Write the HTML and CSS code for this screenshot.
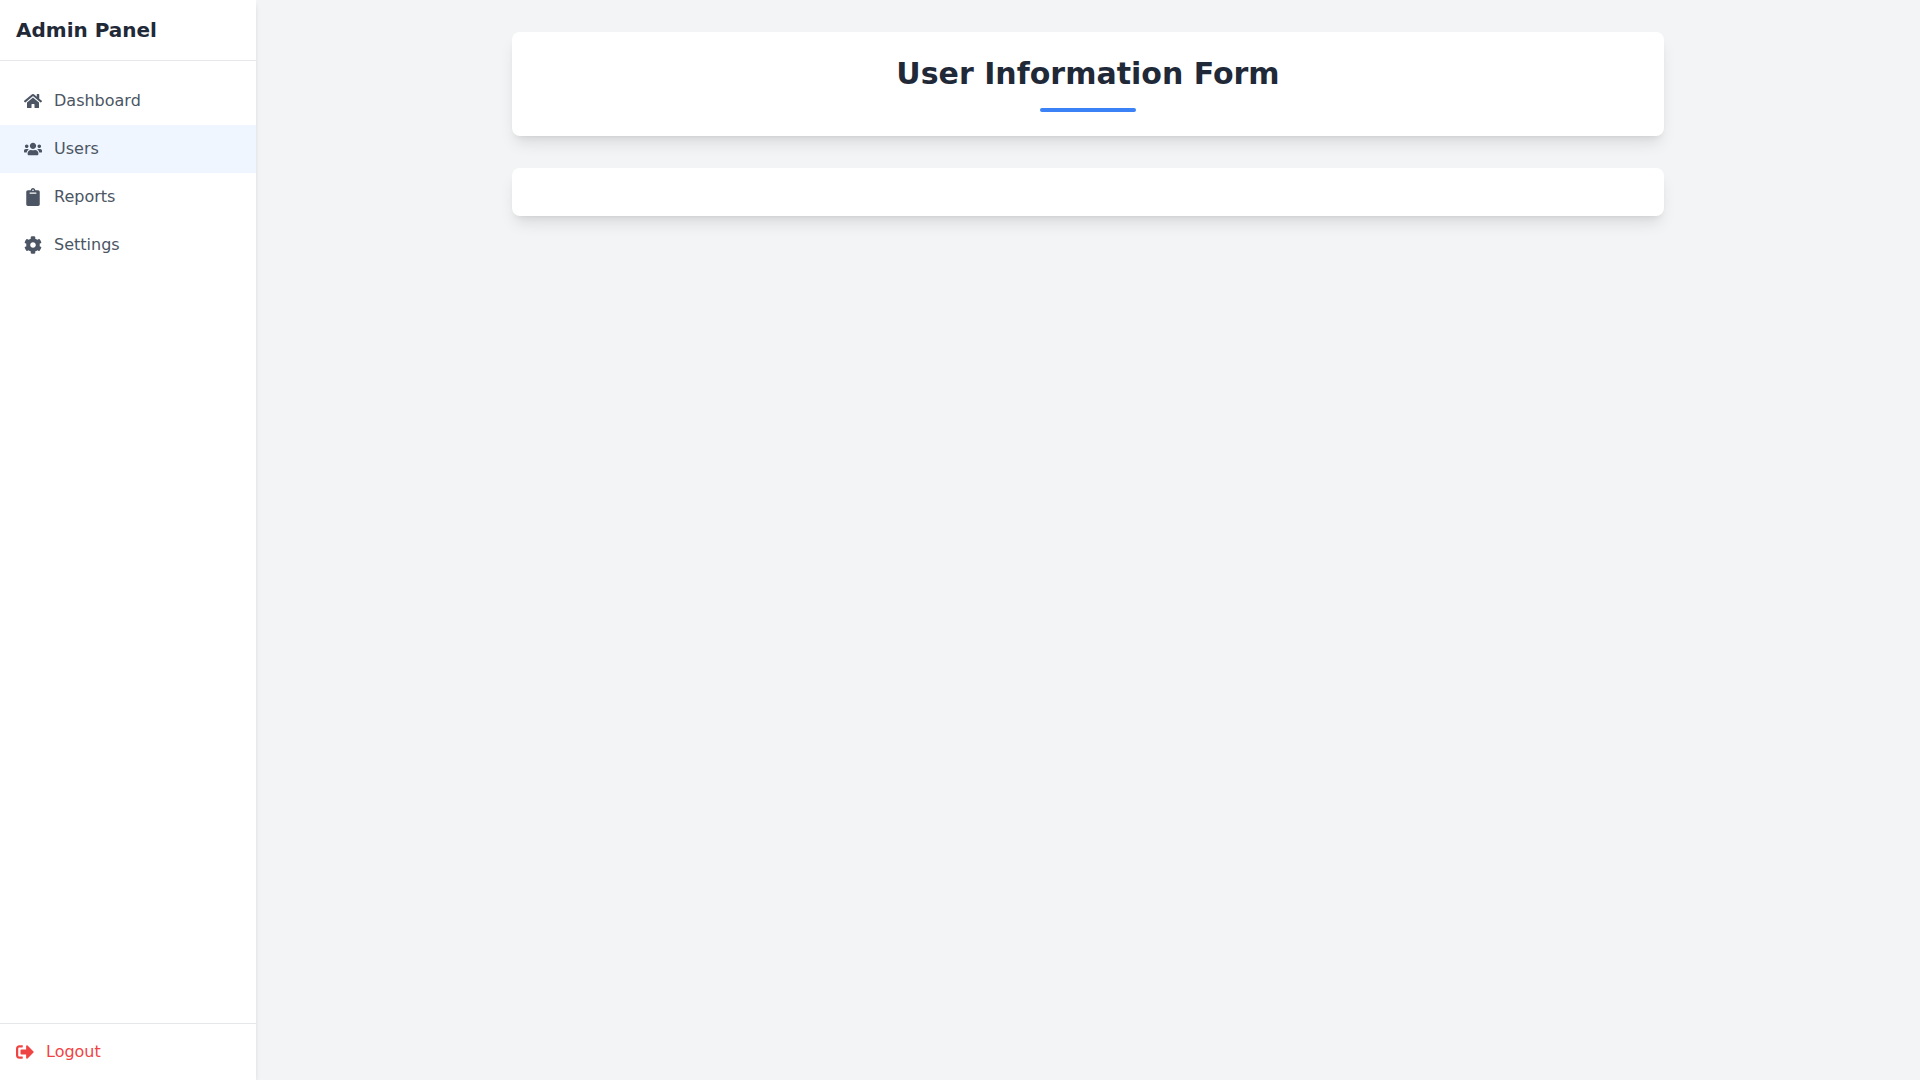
FILE: index.html
```html
<!DOCTYPE html>
<html lang="en">
<head>
<meta charset="utf-8">
<title>Admin Panel</title>
<link rel="stylesheet" href="styles.css">
</head>
<body>
<div class="layout">
  <aside class="sidebar">
    <div class="brand">Admin Panel</div>
    <nav class="nav">
      <a class="nav-item" href="#">
        <svg class="icon" viewBox="0 0 576 512" fill="currentColor"><path d="M280.37 148.26L96 300.11V464a16 16 0 0 0 16 16l112.06-.29a16 16 0 0 0 15.92-16V368a16 16 0 0 1 16-16h64a16 16 0 0 1 16 16v95.64a16 16 0 0 0 16 16.05L464 480a16 16 0 0 0 16-16V300L295.67 148.26a12.19 12.19 0 0 0-15.3 0zM571.6 251.47L488 182.56V44.05a12 12 0 0 0-12-12h-56a12 12 0 0 0-12 12v72.61L318.47 43a48 48 0 0 0-61 0L4.34 251.47a12 12 0 0 0-1.6 16.9l25.5 31A12 12 0 0 0 45.15 301l235.22-193.74a12.19 12.19 0 0 1 15.3 0L530.9 301a12 12 0 0 0 16.9-1.6l25.5-31a12 12 0 0 0-1.7-16.93z"/></svg>
        <span>Dashboard</span>
      </a>
      <a class="nav-item nav-item-active" href="#">
        <svg class="icon" viewBox="0 0 640 512" fill="currentColor"><path d="M96 224c35.3 0 64-28.7 64-64s-28.7-64-64-64-64 28.7-64 64 28.7 64 64 64zm448 0c35.3 0 64-28.7 64-64s-28.7-64-64-64-64 28.7-64 64 28.7 64 64 64zm32 32h-64c-17.6 0-33.5 7.1-45.1 18.6 40.3 22.1 68.9 62 75.1 109.4h66c17.7 0 32-14.3 32-32v-32c0-35.3-28.7-64-64-64zm-256 0c61.9 0 112-50.1 112-112S381.9 32 320 32 208 82.1 208 144s50.1 112 112 112zm76.8 32h-8.3c-20.8 10-43.9 16-68.5 16s-47.6-6-68.5-16h-8.3C179.6 288 128 339.6 128 403.2V432c0 26.5 21.5 48 48 48h288c26.5 0 48-21.5 48-48v-28.8c0-63.6-51.6-115.2-115.2-115.2zm-223.7-13.4C161.5 263.1 145.6 256 128 256H64c-35.3 0-64 28.7-64 64v32c0 17.7 14.3 32 32 32h65.9c6.3-47.4 34.9-87.3 75.2-109.4z"/></svg>
        <span>Users</span>
      </a>
      <a class="nav-item" href="#">
        <svg class="icon" viewBox="0 0 384 512" fill="currentColor"><path d="M384 112v352c0 26.51-21.49 48-48 48H48c-26.51 0-48-21.49-48-48V112c0-26.51 21.49-48 48-48h80c0-35.29 28.71-64 64-64s64 28.71 64 64h80c26.51 0 48 21.49 48 48zM192 40c-13.255 0-24 10.745-24 24s10.745 24 24 24 24-10.745 24-24-10.745-24-24-24m96 114v-20a6 6 0 0 0-6-6H102a6 6 0 0 0-6 6v20a6 6 0 0 0 6 6h180a6 6 0 0 0 6-6z"/></svg>
        <span>Reports</span>
      </a>
      <a class="nav-item" href="#">
        <svg class="icon" viewBox="0 0 512 512" fill="currentColor"><path d="M487.4 315.7l-42.6-24.6c4.3-23.2 4.3-47 0-70.2l42.6-24.6c4.9-2.8 7.1-8.6 5.5-14-11.1-35.6-30-67.8-54.7-94.6-3.8-4.1-10-5.1-14.8-2.3L380.8 110c-17.9-15.4-38.5-27.3-60.8-35.1V25.8c0-5.6-3.9-10.5-9.4-11.7-36.7-8.2-74.3-7.8-109.2 0-5.5 1.2-9.4 6.1-9.4 11.7V75c-22.2 7.9-42.8 19.8-60.8 35.1L88.7 85.5c-4.9-2.8-11-1.9-14.8 2.3-24.7 26.7-43.6 58.9-54.7 94.6-1.7 5.4.6 11.2 5.5 14L67.3 221c-4.3 23.2-4.3 47 0 70.2l-42.6 24.6c-4.9 2.8-7.1 8.6-5.5 14 11.1 35.6 30 67.8 54.7 94.6 3.8 4.1 10 5.1 14.8 2.3l42.6-24.6c17.9 15.4 38.5 27.3 60.8 35.1v49.2c0 5.6 3.9 10.5 9.4 11.7 36.7 8.2 74.3 7.8 109.2 0 5.5-1.2 9.4-6.1 9.4-11.7v-49.2c22.2-7.9 42.8-19.8 60.8-35.1l42.6 24.6c4.9 2.8 11 1.9 14.8-2.3 24.7-26.7 43.6-58.9 54.7-94.6 1.5-5.5-.7-11.3-5.6-14.1zM256 336c-44.1 0-80-35.9-80-80s35.9-80 80-80 80 35.9 80 80-35.9 80-80 80z"/></svg>
        <span>Settings</span>
      </a>
    </nav>
    <div class="sidebar-footer">
      <a class="logout" href="#">
        <svg class="icon" viewBox="0 0 512 512" fill="currentColor"><path d="M497 273L329 441c-15 15-41 4.5-41-17v-96H152c-13.3 0-24-10.7-24-24v-96c0-13.3 10.7-24 24-24h136V88c0-21.4 25.9-32 41-17l168 168c9.3 9.4 9.3 24.6 0 34zM192 436v-40c0-6.6-5.4-12-12-12H96c-17.7 0-32-14.3-32-32V160c0-17.7 14.3-32 32-32h84c6.6 0 12-5.4 12-12V76c0-6.6-5.4-12-12-12H96c-53 0-96 43-96 96v192c0 53 43 96 96 96h84c6.6 0 12-5.4 12-12z"/></svg>
        <span>Logout</span>
      </a>
    </div>
  </aside>
  <main class="main">
    <div class="container">
      <section class="card card-heading">
        <h1 class="title">User Information Form</h1>
        <div class="title-rule"></div>
      </section>
      <section class="card card-empty"></section>
    </div>
  </main>
</div>
</body>
</html>
```
FILE: styles.css
```css
* {
  box-sizing: border-box;
}

html,
body {
  height: 100%;
}

body {
  margin: 0;
  background: #f3f4f6;
  font-family: "DejaVu Sans", sans-serif;
  font-size: 16px;
  line-height: 24px;
  color: #1f2937;
}

a {
  text-decoration: none;
  color: inherit;
}

.layout {
  display: flex;
  height: 100vh;
  overflow: hidden;
}

.sidebar {
  display: flex;
  flex-direction: column;
  flex: 0 0 256px;
  width: 256px;
  background: #ffffff;
  box-shadow: 0 4px 6px -1px rgba(0, 0, 0, 0.1), 0 2px 4px -2px rgba(0, 0, 0, 0.1);
}

.brand {
  padding: 16px;
  font-size: 20px;
  line-height: 28px;
  font-weight: 700;
  color: #1f2937;
  border-bottom: 1px solid #e5e7eb;
}

.nav {
  flex: 1;
  padding: 16px 0;
}

.nav-item {
  display: flex;
  align-items: center;
  gap: 12px;
  height: 48px;
  padding: 0 24px;
  color: #4b5563;
}

.nav-item-active {
  background: #eff6ff;
}

.icon {
  width: 18px;
  height: 18px;
  flex: none;
}

.sidebar-footer {
  padding: 16px;
  border-top: 1px solid #e5e7eb;
}

.logout {
  display: flex;
  align-items: center;
  gap: 12px;
  color: #ef4444;
}

.main {
  flex: 1;
  min-width: 0;
  padding: 32px;
}

.container {
  display: flex;
  flex-direction: column;
  gap: 32px;
  width: 100%;
  max-width: 1152px;
  margin: 0 auto;
}

.card {
  padding: 24px;
  background: #ffffff;
  border-radius: 8px;
  box-shadow: 0 10px 15px -3px rgba(0, 0, 0, 0.1), 0 4px 6px -4px rgba(0, 0, 0, 0.1);
}

.card-heading {
  display: flex;
  flex-direction: column;
  align-items: center;
  gap: 16px;
}

.card-empty {
  height: 48px;
}

.title {
  margin: 0;
  font-size: 30px;
  line-height: 36px;
  font-weight: 700;
  text-align: center;
  color: #1f2937;
}

.title-rule {
  width: 96px;
  height: 4px;
  background: #3b82f6;
  border-radius: 9999px;
}
```
